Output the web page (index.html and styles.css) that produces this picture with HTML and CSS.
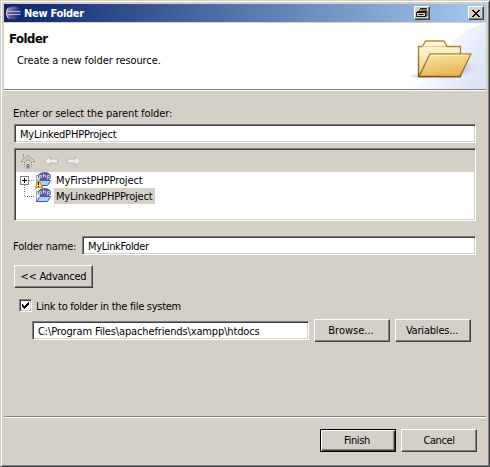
FILE: index.html
```html
<!DOCTYPE html>
<html lang="en">
<head>
<meta charset="utf-8">
<title>New Folder</title>
<link rel="stylesheet" href="styles.css">
</head>
<body>
<main class="window">
  <header class="titlebar">
    <svg class="eclipse" width="16" height="16" viewBox="0 0 16 16">
      <defs><linearGradient id="orb" x1="0" x2="1" y1="0" y2=".4"><stop offset="0" stop-color="#c9a9c8"/><stop offset=".45" stop-color="#655b9d"/><stop offset="1" stop-color="#28286c"/></linearGradient></defs>
      <circle cx="8" cy="8" r="6.7" fill="url(#orb)"/>
      <path d="M4 1.600A7 7 0 0 0 4 14.400 9 9 0 0 1 4 1.600" fill="#e6bec4"/>
      <path d="M2 6.500h12.500M2 9.500h12.500" stroke="#a9b9e2"/>
      <path d="M2 8h13" stroke="#414d92"/>
    </svg>
    <h1 class="caption">New Folder</h1>
    <button class="tool printer" aria-label="Print">
      <svg width="12" height="10" viewBox="0 0 12 10" fill="none" stroke="#000" stroke-width=".9"><path d="M3.500 3.500l1-3h6l-1 3M.5 4.500h9v4h-9zM.5 4.500l1.500-1h9l-1.500 1M11 3.500v4l-1.500 1M2.500 6.500h5M5 2h4"/></svg>
    </button>
    <button class="tool close" aria-label="Close">
      <svg width="8" height="7" viewBox="0 0 8 7" shape-rendering="crispEdges"><path d="M0 0h2v1h1v1h2V1h1V0h2v1H7v1H6v1H5v1h1v1h1v1h1v1H6V6H5V5H3v1H2v1H0V6h1V5h1V4h1V3H2V2H1V1H0z"/></svg>
    </button>
  </header>
  <section class="banner">
    <div class="intro">
      <h2 class="heading">Folder</h2>
      <p class="description">Create a new folder resource.</p>
    </div>
    <svg class="folder-art" width="76" height="66" viewBox="0 0 76 66">
      <defs>
        <linearGradient id="sky" x1="0" x2="1" y1=".2" y2=".7"><stop offset="0" stop-color="#fff"/><stop offset=".35" stop-color="#fafbfe"/><stop offset="1" stop-color="#dbe3f6"/></linearGradient>
        <linearGradient id="front" x1="0" x2=".3" y1="0" y2="1"><stop offset="0" stop-color="#fbe9ae"/><stop offset="1" stop-color="#e5b652"/></linearGradient>
        <linearGradient id="back" x1="0" x2="0" y1="0" y2="1"><stop offset="0" stop-color="#fffbe5"/><stop offset="1" stop-color="#edca78"/></linearGradient>
        <linearGradient id="rim" x1="0" x2="0" y1="0" y2="1"><stop offset="0" stop-color="#b08d30"/><stop offset="1" stop-color="#80591a"/></linearGradient>
        <radialGradient id="shade"><stop offset="0" stop-color="#9185a0" stop-opacity=".5"/><stop offset="1" stop-color="#9185a0" stop-opacity="0"/></radialGradient>
      </defs>
      <path d="M76 0C56 5 43 15 33 31 24 45 14 57 0 66h76z" fill="url(#sky)"/>
      <ellipse cx="44" cy="48" rx="25" ry="8" fill="url(#shade)" transform="rotate(-12 44 48)"/>
      <ellipse cx="12" cy="53" rx="14" ry="3" fill="url(#shade)"/>
      <path d="M8.500 53.500v-30h4l3-5.500h18.500l3 5.500h13.500v30z" fill="url(#back)" stroke="url(#rim)" stroke-width="1.300"/>
      <path d="M12 23.500h24" stroke="#e2cb8c"/>
      <path d="M9 53.500l11-22.500h41l-11 22.500z" fill="url(#front)" stroke="url(#rim)" stroke-width="1.300"/>
      <path d="M20.500 32.200h37" stroke="#fff7d4"/>
    </svg>
  </section>

  <section class="form">
    <label class="parent-label"><span class="t-parent">Enter or select the parent folder:</span></label>
    <div class="field parent-field"><span class="t-project">MyLinkedPHPProject</span></div>
    <div class="tree">
      <div class="toolbar">
        <svg width="14" height="15" viewBox="0 0 14 15" fill="none" stroke="#85837e"><path d="M0 7.500h2m-1-1 6-5 6 5m-1 1h2M2.500 0v4M4 8l3-3.500L10 8" stroke-dasharray="2 1"/><path d="M3.500 8v6M10.500 8v6M7 6v2" stroke-dasharray="1 1"/><path d="M5.500 10h3v4.500h-3z" fill="#85837e" stroke="none"/></svg>
        <svg class="back-icon" width="14" height="12" viewBox="0 0 14 12"><path d="M.5 6l5-5v3h8v4h-8v3z" fill="#eeeeea" stroke="#bbb8b1"/></svg>
        <svg class="forward-icon" width="14" height="12" viewBox="0 0 14 12"><path d="M13.500 6l-5-5v3h-8v4h8v3z" fill="#eeeeea" stroke="#bbb8b1"/></svg>
      </div>
      <div class="branches">
        <svg class="lines" width="38" height="32" viewBox="0 0 38 32">
          <path d="M8.500 13v11M9 24.500h10M13 8.500h6" stroke="#808080" stroke-dasharray="1 1" fill="none"/>
          <rect x="4.500" y="4.500" width="8" height="8" fill="#fff" stroke="#808080"/>
          <path d="M6 8.500h5M8.500 6v5" stroke="#000"/>
          <defs>
            <g id="project">
              <path d="M1.500 3.500h3v-1h4v11h-7z" fill="#fff3cf" stroke="#8e9bdd"/>
              <path d="M1.500 13.500L5 8.500h10.500l-3 5z" fill="#a9d3fa" stroke="#4057b5"/>
              <ellipse cx="9.500" cy="4.500" rx="6.500" ry="4.500" fill="#5b5b9c"/>
              <path d="M4.500 7.500v-4h2v2h-2M8.500 1.500v4M8.500 3.500h2v2M12.500 7.500v-4h2v2h-2" fill="none" stroke="#d9d9fa" stroke-width=".8"/>
            </g>
          </defs>
          <use href="#project" x="19" y="0"/>
          <use href="#project" x="19" y="16"/>
          <path d="M22.500 7.500l4 8h-7z" fill="#ffe838" stroke="#bd8a12"/><path d="M22.500 10v3m0 1v1" stroke="#000"/>
        </svg>
        <div class="names">
          <div class="node"><span class="t-first">MyFirstPHPProject</span></div>
          <div class="node selected"><span class="t-project">MyLinkedPHPProject</span></div>
        </div>
      </div>
    </div>
    <div class="name-row">
      <label class="name-label"><span class="t-name">Folder name:</span></label>
      <div class="field name-field"><span class="t-value">MyLinkFolder</span></div>
    </div>
    <button class="button advanced"><span class="t-advanced">&lt;&lt; Advanced</span></button>
    <label class="link-row">
      <span class="checkbox"><svg width="7" height="7" viewBox="0 0 7 7" shape-rendering="crispEdges"><path d="M0 2h1v1h1v1h1V3h1V2h1V1h1V0h1v3H6v1H5v1H4v1H3v1H2V6H1V5H0z"/></svg></span>
      <span class="t-link">Link to folder in the file system</span>
    </label>
    <div class="path-row">
      <div class="field path-field"><span class="t-path">C:\Program Files\apachefriends\xampp\htdocs</span></div>
      <button class="button"><span class="t-browse">Browse...</span></button>
      <button class="button"><span class="t-variables">Variables...</span></button>
    </div>
  </section>
  <footer class="actions">
    <button class="button default"><span class="t-finish">Finish</span></button>
    <button class="button"><span class="t-cancel">Cancel</span></button>
  </footer>
</main>
</body>
</html>
```
FILE: styles.css
```css
* { box-sizing: border-box; }
body { margin: 0; background: #d4d0c8; color: #000; font: 11px/13px "DejaVu Sans Condensed", "DejaVu Sans", sans-serif; font-stretch: condensed; }
h1, h2, p { margin: 0; }
svg { display: block; flex: none; }
span { display: block; white-space: nowrap; }

.window { display: flex; flex-direction: column; width: 490px; height: 467px; padding: 3px 3px 2px; border: 1px solid #d4d0c8; border-right-color: #404040; border-bottom-color: #404040; box-shadow: inset 1px 1px #fff, inset -1px -1px #808080; }

.titlebar { display: flex; align-items: center; height: 18px; padding: 0 2px; background: linear-gradient(90deg, #0a246a, #a6caf0); }
.caption { margin-left: 2px; padding-top: 1px; color: #fff; font: bold 11px/16px "DejaVu Sans Condensed", "DejaVu Sans", sans-serif; font-stretch: condensed; letter-spacing: -.3px; }
.tool { display: flex; align-items: center; justify-content: center; width: 16px; height: 14px; padding: 0; background: #d4d0c8; border: 1px solid #fff; border-right-color: #404040; border-bottom-color: #404040; box-shadow: inset -1px -1px #808080; }
.printer { margin-left: auto; }
.close { margin-left: 38px; }

.banner { display: flex; justify-content: space-between; height: 68px; margin-top: 1px; background: #fff; border-bottom: 1px solid #fff; box-shadow: inset 0 -1px #808080; }
.intro { padding: 7px 0 0 5px; }
.heading { font: bold 13px/17px "DejaVu Sans Condensed", "DejaVu Sans", sans-serif; font-stretch: condensed; letter-spacing: -.5px; }
.description { margin: 7px 0 0 8px; letter-spacing: -.1px; }

.form { display: flex; flex-direction: column; height: 325px; padding: 16px 10px 0; }
.parent-label { height: 17px; margin-left: -1px; }
.field { height: 19px; padding: 3px 5px 0; background: #fff; border: 1px solid #808080; border-right-color: #fff; border-bottom-color: #fff; box-shadow: inset 1px 1px #404040, inset -1px -1px #d4d0c8; }
.tree { height: 73px; margin-top: 5px; padding: 1px; background: #fff; border: 1px solid #808080; border-right-color: #fff; border-bottom-color: #fff; box-shadow: inset 1px 1px #404040, inset -1px -1px #d4d0c8; }
.toolbar { display: flex; align-items: center; height: 22px; padding-left: 5px; background: #d4d0c8; }
.back-icon { margin-left: 9px; }
.forward-icon { margin-left: 9px; }
.branches { display: flex; }
.names { width: 101px; }
.node { height: 16px; padding: 2px 2px 0; }
.selected { background: #d4d0c8; }
.name-row { display: flex; align-items: center; margin-top: 15px; }
.name-label { width: 69px; margin-left: -1px; padding-top: 2px; }
.name-field { flex: 1; }
.button { display: flex; align-items: center; justify-content: center; width: 76px; height: 23px; padding: 0; font: inherit; color: #000; background: #d4d0c8; border: 1px solid #fff; border-right-color: #404040; border-bottom-color: #404040; box-shadow: inset -1px -1px #808080; }
.advanced { width: 79px; margin-top: 10px; }
.link-row { display: flex; align-items: center; gap: 4px; height: 13px; margin: 11px 0 0 5px; }
.checkbox { display: flex; align-items: center; justify-content: center; width: 13px; height: 13px; background: #fff; border: 1px solid #808080; border-right-color: #fff; border-bottom-color: #fff; box-shadow: inset 1px 1px #404040, inset -1px -1px #d4d0c8; }
.path-row { display: flex; align-items: center; gap: 5px; margin: 7px 0 0 18px; }
.path-field { width: 277px; }
.actions { display: flex; justify-content: flex-end; gap: 5px; flex: 1; padding: 13px 9px 0 0; border-top: 1px solid #808080; box-shadow: inset 0 1px #fff; }
.actions .button { margin-top: -1px; }
.default { border-color: #000; box-shadow: inset 1px 1px #fff, inset -1px -1px #404040, inset -2px -2px #808080; }

/* Label tracking */
.t-parent { letter-spacing: -.09px; }
.t-project { letter-spacing: -.19px; }
.t-first { letter-spacing: -.1px; }
.t-name { letter-spacing: -.15px; }
.t-value { letter-spacing: -.38px; }
.t-advanced { letter-spacing: -.25px; }
.t-link { padding-top: 2px; letter-spacing: -.27px; }
.t-path { letter-spacing: -.14px; }
.t-browse { padding-right: 2px; }
.t-variables { padding-right: 2px; letter-spacing: -.2px; }
.t-finish { padding-right: 2px; letter-spacing: -.35px; }
.t-cancel { letter-spacing: -.4px; }
```
